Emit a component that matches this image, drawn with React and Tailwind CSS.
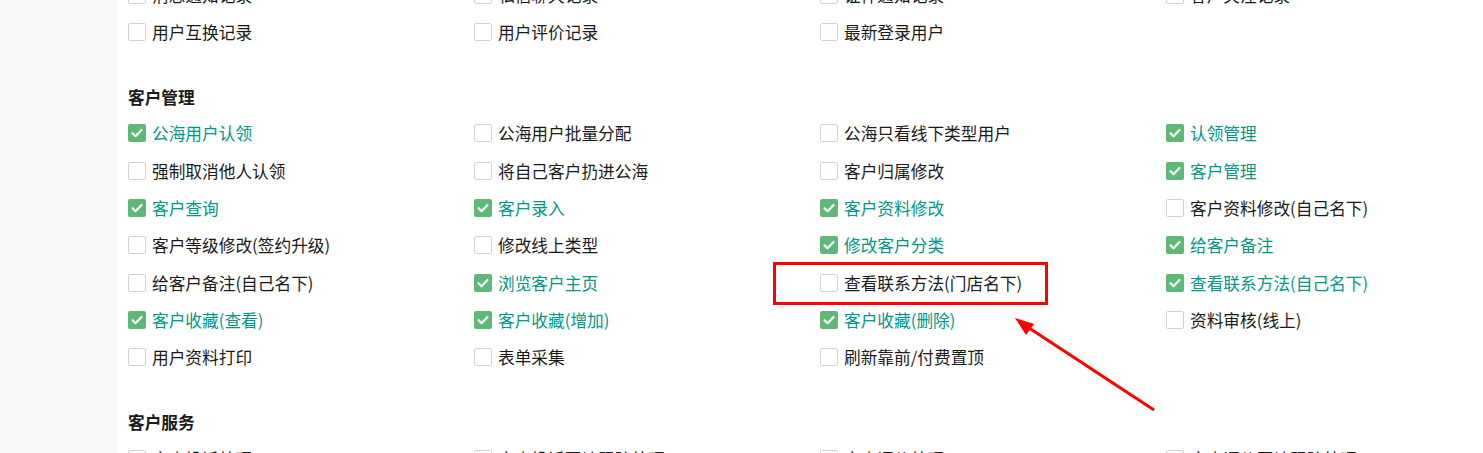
import React from 'react';

// Permission sections: [label, checked]
const sections = [
  {
    title: null,
    items: [
      ['消息通知记录', false],
      ['私信聊天记录', false],
      ['证件通知记录', false],
      ['客户关注记录', false],
      ['用户互换记录', false],
      ['用户评价记录', false],
      ['最新登录用户', false],
    ],
  },
  {
    title: '客户管理',
    items: [
      ['公海用户认领', true],
      ['公海用户批量分配', false],
      ['公海只看线下类型用户', false],
      ['认领管理', true],
      ['强制取消他人认领', false],
      ['将自己客户扔进公海', false],
      ['客户归属修改', false],
      ['客户管理', true],
      ['客户查询', true],
      ['客户录入', true],
      ['客户资料修改', true],
      ['客户资料修改(自己名下)', false],
      ['客户等级修改(签约升级)', false],
      ['修改线上类型', false],
      ['修改客户分类', true],
      ['给客户备注', true],
      ['给客户备注(自己名下)', false],
      ['浏览客户主页', true],
      ['查看联系方法(门店名下)', false],
      ['查看联系方法(自己名下)', true],
      ['客户收藏(查看)', true],
      ['客户收藏(增加)', true],
      ['客户收藏(删除)', true],
      ['资料审核(线上)', false],
      ['用户资料打印', false],
      ['表单采集', false],
      ['刷新靠前/付费置顶', false],
    ],
  },
  {
    title: '客户服务',
    items: [
      ['客户投诉处理', false],
      ['客户投诉回访跟踪处理', false],
      ['客户评价处理', false],
      ['客户评价回访跟踪处理', false],
    ],
  },
];

const Checkbox = ({ checked }) => {
  if (checked) {
    return (
      <span className="flex h-[18px] w-[18px] shrink-0 items-center justify-center rounded-[2px] bg-[#5fb878]">
        <svg width="14" height="14" viewBox="0 0 14 14" fill="none">
          <path d="M2.5 7.2l3 3 6-6.2" stroke="#fff" strokeWidth="2.2" strokeLinecap="round" strokeLinejoin="round" />
        </svg>
      </span>
    );
  }
  return <span className="h-[18px] w-[18px] shrink-0 rounded-[2px] border border-[#d2d2d2] bg-white"></span>;
};

const PermItem = ({ label, checked }) => (
  <div className="flex h-[37.33px] items-center">
    <Checkbox checked={checked} />
    <span className={`ml-[6px] whitespace-nowrap text-[16.7px] leading-[24px] ${checked ? 'text-[#009688]' : 'text-[#1a1a1a]'}`}>
      {label}
    </span>
  </div>
);

const App = () => {
  return (
    <div
      className="relative flex h-[453px] w-[1483px] overflow-hidden bg-white"
      style={{ fontFamily: '"Noto Sans CJK SC", "Noto Sans", sans-serif' }}
    >
      {/* Left strip */}
      <div className="w-[117px] shrink-0 bg-[#f7f7f7]"></div>

      {/* Permission list */}
      <div className="flex-1 pl-[11px]">
        <div className="-mt-[24px]">
          {sections.map((section, i) => (
            <div key={i}>
              {section.title && (
                <h3 className="mt-[34px] mb-[6px] text-[16.7px] font-bold leading-[24px] text-[#1a1a1a]">{section.title}</h3>
              )}
              <div className="grid grid-cols-[repeat(4,346px)]">
                {section.items.map(([label, checked]) => (
                  <PermItem key={label} label={label} checked={checked} />
                ))}
              </div>
            </div>
          ))}
        </div>
      </div>

      {/* Annotation: red box + arrow */}
      <div className="pointer-events-none absolute left-[773px] top-[262px] h-[43px] w-[275px] border-[3px] border-[#ff0000]"></div>
      <svg className="pointer-events-none absolute left-0 top-0" width="1483" height="453" viewBox="0 0 1483 453">
        <line x1="1154" y1="410" x2="1026" y2="326" stroke="#ff0000" strokeWidth="3" />
        <polygon points="1015,318 1034,324 1026,335" fill="#ff0000" />
      </svg>
    </div>
  );
};

export default App;
